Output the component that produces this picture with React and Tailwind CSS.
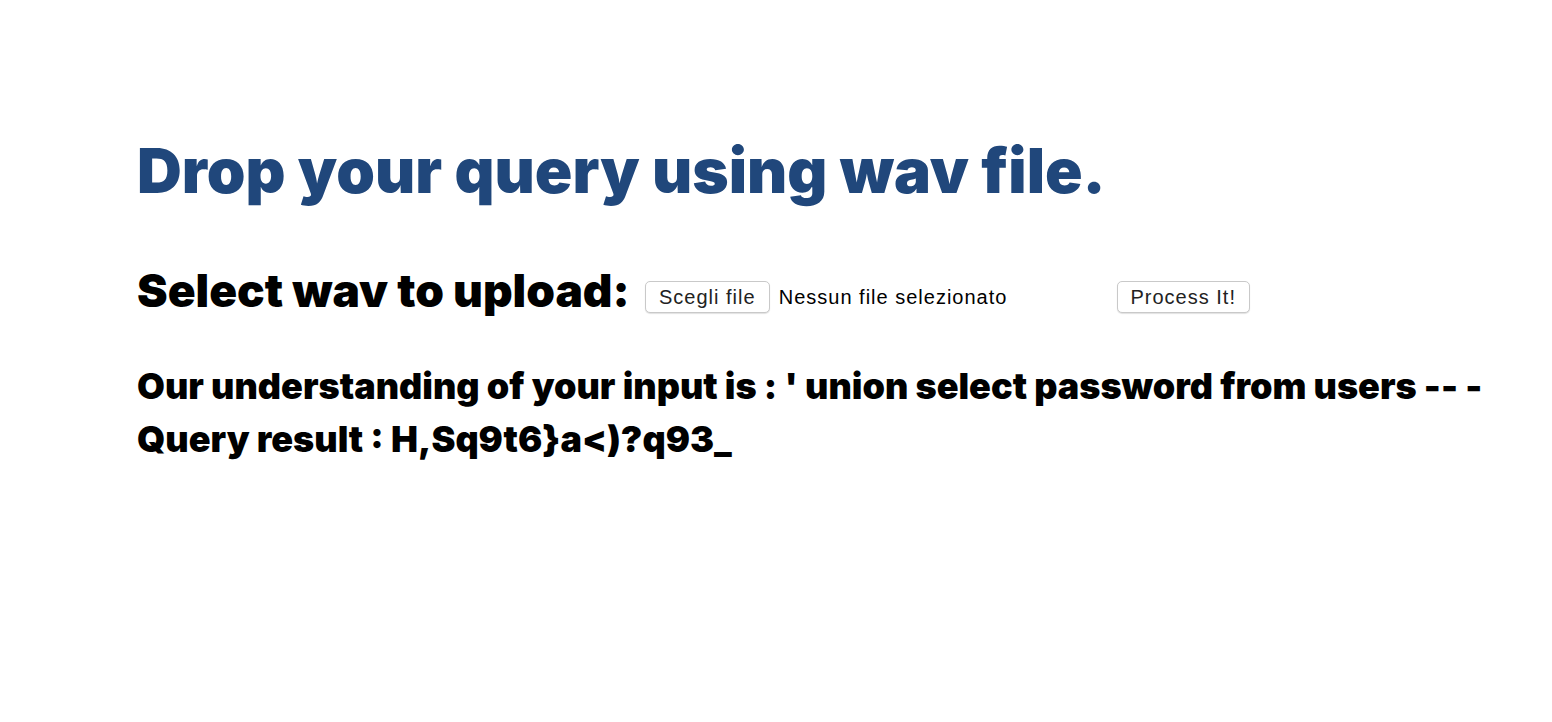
export default function App() {
  const btn =
    "h-[32px] rounded-[5px] border border-[#c9c9c9] bg-white text-[20px] leading-none tracking-[1px] text-[#222] shadow-[0_1px_1px_rgba(0,0,0,0.12)]";
  return (
    <div className="min-h-[722px] bg-white pl-[137px] pt-[127px]" style={{ fontFamily: "Inter, 'Noto Sans', sans-serif" }}>
      <h1 className="text-[62px] leading-[88px] font-black text-[#20477b]">
        Drop your query using wav file.
      </h1>
      <div className="mt-[47px] flex items-center">
        <span className="text-[46px] leading-[56px] font-black text-black">Select wav to upload:</span>
        <div className="ml-[15px] mt-[14px] flex items-center w-[472px]" style={{ fontFamily: "'Liberation Sans', Arial, sans-serif" }}>
          <button className={btn + " w-[125px]"}>Scegli file</button>
          <span className="ml-[9px] text-[20px] tracking-[1px] text-black">Nessun file selezionato</span>
        </div>
        <button className={btn + " mt-[14px] w-[133px]"} style={{ fontFamily: "'Liberation Sans', Arial, sans-serif" }}>
          Process It!
        </button>
      </div>
      <div className="mt-[42px] text-[36px] leading-[53px] font-black text-black">
        <p>Our understanding of your input is : ' union select password from users -- -</p>
        <p>Query result : H,Sq9t6}a&lt;)?q93_</p>
      </div>
    </div>
  );
}
